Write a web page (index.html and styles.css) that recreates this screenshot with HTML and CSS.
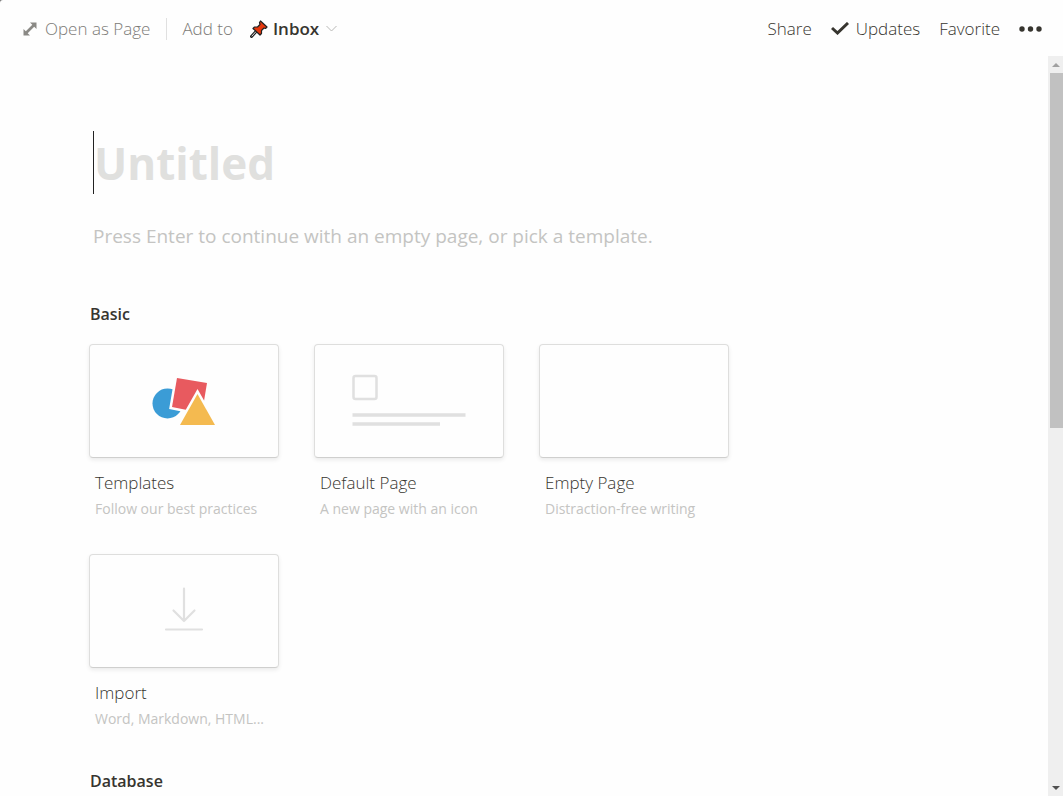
FILE: index.html
```html
<!DOCTYPE html>
<html lang="en">
<head>
<meta charset="utf-8">
<meta name="viewport" content="width=device-width, initial-scale=1">
<title>Untitled</title>
<link rel="stylesheet" href="styles.css">
</head>
<body>
<div class="window">
  <header class="topbar">
    <button class="action muted open-page" type="button">
      <svg class="icon-expand" viewBox="0 0 14 14" aria-hidden="true"><path d="M7 0.500H13.500V7L11.200 4.700L4.700 11.200L7 13.500H0.500V7L2.800 9.300L9.300 2.800Z"/></svg>
      Open as Page
    </button>
    <span class="divider"></span>
    <span class="add-to">Add to</span>
    <button class="action location" type="button">
      <svg class="icon-pin" viewBox="0 0 18 18" aria-hidden="true">
        <path d="M6.500 11L1.500 16.500" stroke="#222" stroke-width="3" stroke-linecap="round"/>
        <path d="M6.500 11L1.700 16.300" stroke="#ddd" stroke-width="1"/>
        <path d="M10.500 1L17 7L15.500 8.500L14 8L11.500 10.500L11.500 13.500L10 15L3 8.500L4.500 7L7.500 7L10 4.500L9.500 2.500Z" fill="#e8380d" stroke="#222" stroke-width="1.200" stroke-linejoin="round"/>
      </svg>
      <strong class="location-name">Inbox</strong>
      <svg class="icon-chevron" viewBox="0 0 11 7" aria-hidden="true"><path d="M0.500 1L5.500 6L10.500 1"/></svg>
    </button>
    <nav class="page-actions" aria-label="Page actions">
      <button class="action" type="button">Share</button>
      <button class="action updates" type="button">
        <svg class="icon-check" viewBox="0 0 18 13" aria-hidden="true"><path d="M1 6L6.500 11L17 1"/></svg>
        Updates
      </button>
      <button class="action" type="button">Favorite</button>
      <button class="action" type="button" aria-label="More">
        <svg class="icon-more" viewBox="0 0 23 6" aria-hidden="true"><circle cx="3" cy="3" r="2.700"/><circle cx="11.500" cy="3" r="2.700"/><circle cx="20" cy="3" r="2.700"/></svg>
      </button>
    </nav>
  </header>
  <div class="viewport">
    <main class="page">
      <div class="title-line"><input class="title" type="text" placeholder="Untitled" aria-label="Page title"></div>
      <p class="hint">Press Enter to continue with an empty page, or pick a template.</p>
      <section>
        <h2 class="group">Basic</h2>
        <div class="cards">
          <button class="card" type="button">
            <span class="thumb">
              <svg class="art" viewBox="0 0 188 112" aria-hidden="true">
                <circle cx="77.500" cy="58.500" r="15" fill="#3b9cd6"/>
                <path d="M87 33L117 38L112 68L82 62Z" fill="#e85a5f" stroke="#fefefe" stroke-width="5"/>
                <path d="M87 33L117 38L112 68L82 62Z" fill="#e85a5f"/>
                <path d="M107.500 49L125 80H90Z" fill="#f4ba50" stroke="#fefefe" stroke-width="5"/>
                <path d="M107.500 49L125 80H90Z" fill="#f4ba50"/>
              </svg>
            </span>
            <span class="name">Templates</span>
            <span class="about">Follow our best practices</span>
          </button>
          <button class="card" type="button">
            <span class="thumb">
              <svg class="art" viewBox="0 0 188 112" aria-hidden="true">
                <rect x="38.500" y="31" width="23" height="23" rx="2" fill="none" stroke="#e0e0e0" stroke-width="2.500"/>
                <path d="M37.500 70H150.500M37.500 79H125" stroke="#e0e0e0" stroke-width="3.500"/>
              </svg>
            </span>
            <span class="name">Default Page</span>
            <span class="about">A new page with an icon</span>
          </button>
          <button class="card" type="button">
            <span class="thumb"></span>
            <span class="name">Empty Page</span>
            <span class="about">Distraction-free writing</span>
          </button>
          <button class="card" type="button">
            <span class="thumb">
              <svg class="art" viewBox="0 0 188 112" aria-hidden="true">
                <path d="M94 33.500V66M83.500 55.500L94 66L104.500 55.500M76 74.500H112" fill="none" stroke="#e0e0e0" stroke-width="2.200" stroke-linecap="round" stroke-linejoin="round"/>
              </svg>
            </span>
            <span class="name">Import</span>
            <span class="about">Word, Markdown, HTML...</span>
          </button>
        </div>
      </section>
      <section>
        <h2 class="group">Database</h2>
      </section>
    </main>
    <div class="scrollbar" aria-hidden="true">
      <span class="arrow up"></span>
      <span class="thumb-bar"></span>
      <span class="arrow down"></span>
    </div>
  </div>
</div>
</body>
</html>
```
FILE: styles.css
```css
* { box-sizing: border-box; }
body {
  margin: 0;
  background: #777;
  color: #37352f;
  font-family: "Open Sans", "Noto Sans", sans-serif;
  font-weight: 300;
  font-size: 17px;
}
button {
  font: inherit;
  color: inherit;
  background: none;
  border: 0;
  padding: 0;
  cursor: pointer;
}
svg { display: block; flex: none; }
.window {
  display: flex;
  flex-direction: column;
  height: 100vh;
  overflow: hidden;
  background: #fefefe;
  border-top-left-radius: 3px;
}
.topbar {
  display: flex;
  align-items: center;
  flex: none;
  height: 56px;
  padding: 1px 21px 0 23px;
  white-space: nowrap;
}
.action {
  display: flex;
  align-items: center;
  line-height: 24px;
}
.muted, .add-to { color: #7c7b77; }
.add-to { line-height: 24px; }
.open-page { gap: 8px; }
.divider {
  width: 1px;
  height: 22px;
  margin: 0 15px 0 16px;
  background: #e0e0e0;
}
.location { gap: 5px; margin-left: 17px; }
.location-name { font-weight: 600; }
.icon-expand { width: 14px; height: 14px; fill: #8a8985; }
.icon-pin { width: 18px; height: 18px; fill: none; }
.icon-chevron {
  width: 11px;
  height: 7px;
  margin-left: 2px;
  fill: none;
  stroke: #b8b8b6;
}
.page-actions {
  display: flex;
  gap: 19px;
  margin-left: auto;
}
.updates { gap: 7px; }
.icon-check {
  width: 18px;
  height: 13px;
  fill: none;
  stroke: #37352f;
  stroke-width: 3;
}
.icon-more { width: 23px; height: 6px; fill: #37352f; }
.viewport {
  display: flex;
  flex: 1;
  min-height: 0;
}
.page {
  flex: 1;
  min-width: 0;
  overflow: hidden;
  padding: 75px 89px 0;
}
.title-line {
  height: 63px;
  margin-left: 4px;
  border-left: 1px solid #222;
}
.title {
  display: block;
  width: 100%;
  height: 100%;
  padding: 0;
  border: 0;
  outline: 0;
  background: none;
  color: inherit;
  font: 700 44px "Open Sans", "Noto Sans", sans-serif;
}
.title::placeholder { color: #e0e0de; opacity: 1; }
.hint {
  margin: 28px 0 52px 4px;
  color: #c4c4c2;
  font-size: 19px;
  font-weight: 400;
  line-height: 28px;
}
.group {
  margin: 0 0 18px 1px;
  font-size: 16px;
  font-weight: 600;
  line-height: 24px;
}
.cards {
  display: flex;
  flex-wrap: wrap;
  gap: 32px 35px;
  max-width: 680px;
  margin-bottom: 37px;
}
.card {
  display: flex;
  flex-direction: column;
  width: 190px;
  text-align: left;
}
.thumb {
  width: 100%;
  height: 114px;
  margin-bottom: 12px;
  border: 1px solid #dededd;
  border-bottom-color: #cfcfce;
  border-radius: 4px;
  box-shadow: 0 2px 4px rgba(15, 15, 15, 0.08);
}
.art { width: 100%; height: 100%; }
.name { padding-left: 6px; line-height: 26px; }
.about {
  padding-left: 6px;
  color: #c4c4c2;
  font-size: 14px;
  font-weight: 400;
  line-height: 26px;
}
.scrollbar {
  display: flex;
  flex-direction: column;
  flex: none;
  width: 15px;
  background: #efefef;
}
.arrow {
  flex: none;
  height: 17px;
  display: flex;
  align-items: center;
  justify-content: center;
}
.arrow::before {
  content: "";
  border: 4px solid transparent;
}
.up::before { border-top: 0; border-bottom-color: #a0a0a0; }
.down::before { border-bottom: 0; border-top-color: #505050; }
.down { margin-top: auto; }
.thumb-bar {
  height: 48%;
  margin-left: 2px;
  background: #c1c1c1;
}
```
